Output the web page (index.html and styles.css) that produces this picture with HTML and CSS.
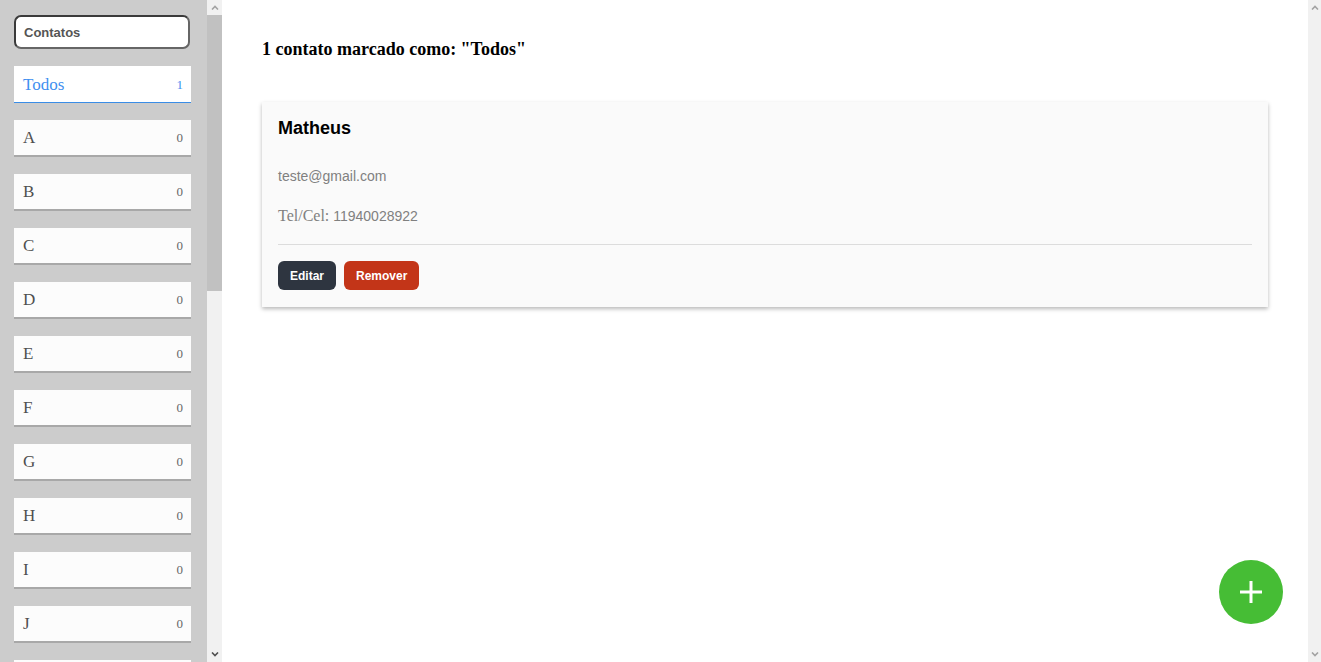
FILE: index.html
```html
<!DOCTYPE html>
<html lang="pt">
<head>
<meta charset="utf-8">
<title>Contatos</title>
<link rel="stylesheet" href="styles.css">
</head>
<body>
<aside class="sidebar">
  <div class="search"><input class="search-input" type="text" placeholder="Contatos"></div>
  <ul class="tags">
    <li class="tag active"><span class="tag-name">Todos</span><span class="tag-count">1</span></li>
    <li class="tag"><span class="tag-name">A</span><span class="tag-count">0</span></li>
    <li class="tag"><span class="tag-name">B</span><span class="tag-count">0</span></li>
    <li class="tag"><span class="tag-name">C</span><span class="tag-count">0</span></li>
    <li class="tag"><span class="tag-name">D</span><span class="tag-count">0</span></li>
    <li class="tag"><span class="tag-name">E</span><span class="tag-count">0</span></li>
    <li class="tag"><span class="tag-name">F</span><span class="tag-count">0</span></li>
    <li class="tag"><span class="tag-name">G</span><span class="tag-count">0</span></li>
    <li class="tag"><span class="tag-name">H</span><span class="tag-count">0</span></li>
    <li class="tag"><span class="tag-name">I</span><span class="tag-count">0</span></li>
    <li class="tag"><span class="tag-name">J</span><span class="tag-count">0</span></li>
    <li class="tag"><span class="tag-name">K</span><span class="tag-count">0</span></li>
    <li class="tag"><span class="tag-name">L</span><span class="tag-count">0</span></li>
    <li class="tag"><span class="tag-name">M</span><span class="tag-count">0</span></li>
    <li class="tag"><span class="tag-name">N</span><span class="tag-count">0</span></li>
    <li class="tag"><span class="tag-name">O</span><span class="tag-count">0</span></li>
    <li class="tag"><span class="tag-name">P</span><span class="tag-count">0</span></li>
    <li class="tag"><span class="tag-name">Q</span><span class="tag-count">0</span></li>
    <li class="tag"><span class="tag-name">R</span><span class="tag-count">0</span></li>
    <li class="tag"><span class="tag-name">S</span><span class="tag-count">0</span></li>
    <li class="tag"><span class="tag-name">T</span><span class="tag-count">0</span></li>
    <li class="tag"><span class="tag-name">U</span><span class="tag-count">0</span></li>
    <li class="tag"><span class="tag-name">V</span><span class="tag-count">0</span></li>
    <li class="tag"><span class="tag-name">W</span><span class="tag-count">0</span></li>
    <li class="tag"><span class="tag-name">X</span><span class="tag-count">0</span></li>
    <li class="tag"><span class="tag-name">Y</span><span class="tag-count">0</span></li>
    <li class="tag"><span class="tag-name">Z</span><span class="tag-count">0</span></li>
  </ul>
</aside>
<div class="scrollbar scrollbar-side">
  <div class="sb-btn"><svg width="8" height="5" viewBox="0 0 8 5"><path d="M1 4.5L4 1.5L7 4.5" stroke="#a3a3a3" stroke-width="1.6" fill="none"/></svg></div>
  <div class="sb-track"><div class="sb-thumb"></div></div>
  <div class="sb-btn"><svg width="8" height="5" viewBox="0 0 8 5"><path d="M1 0.5L4 3.5L7 0.5" stroke="#505050" stroke-width="1.6" fill="none"/></svg></div>
</div>
<main class="main">
  <h3 class="title">1 contato marcado como: "Todos"</h3>
  <section class="card">
    <h4 class="card-name">Matheus</h4>
    <p class="card-email">teste@gmail.com</p>
    <p class="card-phone"><span class="phone-label">Tel/Cel:</span> 11940028922</p>
    <hr class="card-divider">
    <div class="card-actions">
      <button class="btn btn-edit">Editar</button>
      <button class="btn btn-remove">Remover</button>
    </div>
  </section>
  <button class="fab" aria-label="Adicionar">
    <svg width="24" height="24" viewBox="0 0 24 24"><path d="M12 1v22M1 12h22" stroke="#fff" stroke-width="3" fill="none"/></svg>
  </button>
</main>
<div class="scrollbar scrollbar-main">
  <div class="sb-btn"><svg width="8" height="5" viewBox="0 0 8 5"><path d="M1 4.5L4 1.5L7 4.5" stroke="#a3a3a3" stroke-width="1.6" fill="none"/></svg></div>
  <div class="sb-track"></div>
  <div class="sb-btn"><svg width="8" height="5" viewBox="0 0 8 5"><path d="M1 0.5L4 3.5L7 0.5" stroke="#a3a3a3" stroke-width="1.6" fill="none"/></svg></div>
</div>
</body>
</html>
```
FILE: styles.css
```css
html, body {
  margin: 0;
  padding: 0;
  height: 100%;
}
body {
  display: flex;
  overflow: hidden;
  font-family: "Liberation Serif", "Times New Roman", serif;
  background: #fff;
}
.scrollbar {
  height: 100vh;
  background: #f1f1f1;
  display: flex;
  flex-direction: column;
}
.scrollbar-side {
  flex: 0 0 15px;
}
.scrollbar-main {
  flex: 0 0 13px;
}
.sb-btn {
  height: 15px;
  flex: 0 0 15px;
  display: flex;
  align-items: center;
  justify-content: center;
}
.sb-track {
  flex: 1;
}
.sb-thumb {
  height: 276px;
  background: #c1c1c1;
}
.sidebar {
  flex: 0 0 207px;
  height: 100vh;
  overflow: hidden;
  background: #cccccc;
  box-sizing: border-box;
}
.search {
  padding: 15px 0 0 14px;
}
.search-input {
  display: block;
  box-sizing: border-box;
  width: 176px;
  height: 34px;
  border: 2px solid #3a3a3a;
  border-bottom-color: #666;
  border-right-color: #666;
  border-radius: 7px;
  padding: 0 8px;
  font-family: "Liberation Sans", Arial, sans-serif;
  font-weight: bold;
  font-size: 13px;
  color: #555;
  background: #fff;
  outline: none;
}
.search-input::placeholder {
  color: #555;
  opacity: 1;
}
.tags {
  list-style: none;
  margin: 17px 0 0 14px;
  padding: 0;
  display: flex;
  flex-direction: column;
  gap: 17px;
}
.tag {
  box-sizing: border-box;
  width: 177px;
  height: 37px;
  background: #fcfcfc;
  border-bottom: 2px solid #a8a8a8;
  display: flex;
  align-items: center;
  justify-content: space-between;
  padding: 1px 8px 0 9px;
}
.tag-name {
  font-size: 17px;
  color: #4f4f4f;
}
.tag-count {
  font-size: 13px;
  color: #666;
}
.tag.active {
  border-bottom: 1px solid #3a8de6;
  background: #fff;
}
.tag.active .tag-name,
.tag.active .tag-count {
  color: #3f8ff0;
}
.main {
  flex: 1;
  height: 100vh;
  overflow: hidden;
  box-sizing: border-box;
  padding: 20px 40px;
  position: relative;
}
.title {
  margin: 19px 0 0;
  font-size: 18px;
  line-height: 21px;
  font-weight: bold;
  color: #000;
}
.card {
  margin-top: 42px;
  background: #fafafa;
  box-shadow: 0 2px 4px rgba(0, 0, 0, 0.28);
  padding: 17px 16px 17px;
  font-family: "Liberation Sans", Arial, sans-serif;
}
.card-name {
  margin: 0;
  font-size: 18px;
  line-height: 18px;
  font-weight: bold;
  color: #000;
}
.card-email,
.card-phone {
  margin: 0;
  font-size: 14px;
  line-height: 16px;
  color: #808080;
}
.card-email {
  margin-top: 31px;
}
.card-phone {
  margin-top: 24px;
}
.phone-label {
  font-family: "Liberation Serif", "Times New Roman", serif;
  font-size: 16px;
}
.card-divider {
  margin: 20px 0 0;
  border: 0;
  border-top: 1px solid #dcdcdc;
  height: 0;
}
.card-actions {
  margin-top: 16px;
  display: flex;
  gap: 8px;
}
.btn {
  height: 29px;
  padding: 0 12px;
  border: 0;
  border-radius: 6px;
  font-family: "Liberation Sans", Arial, sans-serif;
  font-weight: bold;
  font-size: 12px;
  color: #fff;
}
.btn-edit {
  background: #2e3540;
}
.btn-remove {
  background: #c33518;
}
.fab {
  position: fixed;
  right: 38px;
  bottom: 38px;
  width: 64px;
  height: 64px;
  border-radius: 50%;
  border: 0;
  background: #46bd35;
  display: flex;
  align-items: center;
  justify-content: center;
  padding: 0;
}
```
